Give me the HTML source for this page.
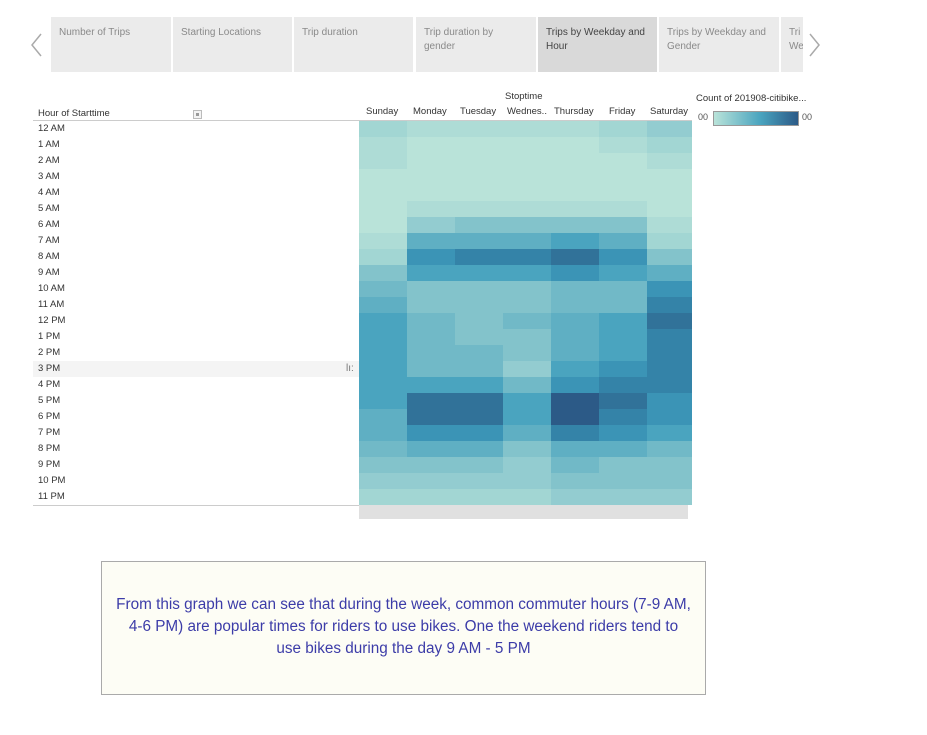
<!DOCTYPE html>
<html><head><meta charset="utf-8"><style>
*{margin:0;padding:0;box-sizing:border-box}
body{width:927px;height:735px;background:#fff;position:relative;font-family:"Liberation Sans",sans-serif;overflow:hidden}
.a{position:absolute}
.tab{position:absolute;top:17px;height:55px;background:#ebebeb;color:#8a8a8a;font-size:10px;line-height:14px;padding:9px 8px;overflow:hidden;white-space:nowrap}
.tab.sel{background:#d9d9d9;color:#444}
.lbl{position:absolute;left:38px;font-size:9.5px;color:#333;height:16px;line-height:16px}
.day{position:absolute;top:106px;font-size:9.5px;color:#333}
#grid{position:absolute;left:359px;top:121px;width:333px;display:grid;grid-template-columns:48px 48px 48px 48px 48px 48px 45px;grid-auto-rows:16px}
.c0{background:#b9e3d9}.c1{background:#aedcd6}.c2{background:#a2d6d3}.c3{background:#93ccd0}.c4{background:#83c3cb}.c5{background:#71b9c7}.c6{background:#5fafc3}.c7{background:#4aa4bf}.c8{background:#3b94b6}.c9{background:#3483a8}.c10{background:#317299}.c11{background:#2c5a87}
</style></head><body>
<div class="a" style="left:30px;top:33px;width:12px;height:24px"><svg width="12" height="24"><path d="M11 1 L2 12 L11 23" stroke="#aaa" stroke-width="1.5" fill="none"/></svg></div>
<div class="tab" style="left:51px;width:120px">Number of Trips</div>
<div class="tab" style="left:173px;width:119px">Starting Locations</div>
<div class="tab" style="left:294px;width:119px">Trip duration</div>
<div class="tab" style="left:416px;width:120px">Trip duration by<br>gender</div>
<div class="tab sel" style="left:538px;width:119px">Trips by Weekday and<br>Hour</div>
<div class="tab" style="left:659px;width:120px">Trips by Weekday and<br>Gender</div>
<div class="tab" style="left:781px;width:22px;padding-left:8px">Tri<br>We</div>
<div class="a" style="left:809px;top:33px;width:12px;height:24px"><svg width="12" height="24"><path d="M1 1 L10 12 L1 23" stroke="#aaa" stroke-width="1.5" fill="none"/></svg></div>

<div class="a" style="left:38px;top:108px;font-size:9.5px;color:#333">Hour of Starttime</div>
<div class="a" style="left:193px;top:110px;width:9px;height:9px;border:1px solid #bbb;background:#f3f3f3"><div style="margin:2px;width:3px;height:3px;background:#999"></div></div>
<div class="a" style="left:33px;top:120px;width:326px;height:1px;background:#ccc"></div>
<div class="a" style="left:33px;top:505px;width:326px;height:1px;background:#ccc"></div>
<div class="a" style="left:33px;top:361px;width:326px;height:16px;background:#f4f4f4"></div>
<div class="a" style="left:346px;top:363px;font-size:10px;color:#777">lı:</div>
<div class="a" style="left:505px;top:91px;font-size:9.5px;color:#333">Stoptime</div>
<div class="day" style="left:366px">Sunday</div>
<div class="day" style="left:413px">Monday</div>
<div class="day" style="left:460px">Tuesday</div>
<div class="day" style="left:507px">Wednes..</div>
<div class="day" style="left:554px">Thursday</div>
<div class="day" style="left:609px">Friday</div>
<div class="day" style="left:650px">Saturday</div>
<div class="a" style="left:359px;top:120px;width:333px;height:1px;background:#ccc"></div>

<div class="a" style="left:696px;top:93px;font-size:9.5px;color:#333">Count of 201908-citibike...</div>
<div class="a" style="left:698px;top:112px;font-size:9px;color:#555">00</div>
<div class="a" style="left:713px;top:111px;width:86px;height:15px;border:1px solid #999;background:linear-gradient(90deg,#b9e3d9,#4aa4bf 55%,#2c5a87)"></div>
<div class="a" style="left:802px;top:112px;font-size:9px;color:#555">00</div>

<div class="lbl" style="top:121px">12 AM</div><div class="lbl" style="top:137px">1 AM</div><div class="lbl" style="top:153px">2 AM</div><div class="lbl" style="top:169px">3 AM</div><div class="lbl" style="top:185px">4 AM</div><div class="lbl" style="top:201px">5 AM</div><div class="lbl" style="top:217px">6 AM</div><div class="lbl" style="top:233px">7 AM</div><div class="lbl" style="top:249px">8 AM</div><div class="lbl" style="top:265px">9 AM</div><div class="lbl" style="top:281px">10 AM</div><div class="lbl" style="top:297px">11 AM</div><div class="lbl" style="top:313px">12 PM</div><div class="lbl" style="top:329px">1 PM</div><div class="lbl" style="top:345px">2 PM</div><div class="lbl" style="top:361px">3 PM</div><div class="lbl" style="top:377px">4 PM</div><div class="lbl" style="top:393px">5 PM</div><div class="lbl" style="top:409px">6 PM</div><div class="lbl" style="top:425px">7 PM</div><div class="lbl" style="top:441px">8 PM</div><div class="lbl" style="top:457px">9 PM</div><div class="lbl" style="top:473px">10 PM</div><div class="lbl" style="top:489px">11 PM</div>

<div id="grid">
<div class="c2"></div><div class="c1"></div><div class="c1"></div><div class="c1"></div><div class="c1"></div><div class="c2"></div><div class="c3"></div>
<div class="c1"></div><div class="c0"></div><div class="c0"></div><div class="c0"></div><div class="c0"></div><div class="c1"></div><div class="c2"></div>
<div class="c1"></div><div class="c0"></div><div class="c0"></div><div class="c0"></div><div class="c0"></div><div class="c0"></div><div class="c1"></div>
<div class="c0"></div><div class="c0"></div><div class="c0"></div><div class="c0"></div><div class="c0"></div><div class="c0"></div><div class="c0"></div>
<div class="c0"></div><div class="c0"></div><div class="c0"></div><div class="c0"></div><div class="c0"></div><div class="c0"></div><div class="c0"></div>
<div class="c0"></div><div class="c1"></div><div class="c1"></div><div class="c1"></div><div class="c1"></div><div class="c1"></div><div class="c0"></div>
<div class="c0"></div><div class="c3"></div><div class="c4"></div><div class="c4"></div><div class="c4"></div><div class="c4"></div><div class="c1"></div>
<div class="c1"></div><div class="c6"></div><div class="c6"></div><div class="c6"></div><div class="c7"></div><div class="c6"></div><div class="c2"></div>
<div class="c2"></div><div class="c8"></div><div class="c9"></div><div class="c9"></div><div class="c10"></div><div class="c8"></div><div class="c4"></div>
<div class="c4"></div><div class="c7"></div><div class="c7"></div><div class="c7"></div><div class="c8"></div><div class="c7"></div><div class="c6"></div>
<div class="c5"></div><div class="c4"></div><div class="c4"></div><div class="c4"></div><div class="c5"></div><div class="c5"></div><div class="c8"></div>
<div class="c6"></div><div class="c4"></div><div class="c4"></div><div class="c4"></div><div class="c5"></div><div class="c5"></div><div class="c9"></div>
<div class="c7"></div><div class="c5"></div><div class="c4"></div><div class="c5"></div><div class="c6"></div><div class="c7"></div><div class="c10"></div>
<div class="c7"></div><div class="c5"></div><div class="c4"></div><div class="c4"></div><div class="c6"></div><div class="c7"></div><div class="c9"></div>
<div class="c7"></div><div class="c5"></div><div class="c5"></div><div class="c4"></div><div class="c6"></div><div class="c7"></div><div class="c9"></div>
<div class="c7"></div><div class="c5"></div><div class="c5"></div><div class="c3"></div><div class="c7"></div><div class="c8"></div><div class="c9"></div>
<div class="c7"></div><div class="c7"></div><div class="c7"></div><div class="c5"></div><div class="c8"></div><div class="c9"></div><div class="c9"></div>
<div class="c7"></div><div class="c10"></div><div class="c10"></div><div class="c7"></div><div class="c11"></div><div class="c10"></div><div class="c8"></div>
<div class="c6"></div><div class="c10"></div><div class="c10"></div><div class="c7"></div><div class="c11"></div><div class="c9"></div><div class="c8"></div>
<div class="c6"></div><div class="c8"></div><div class="c8"></div><div class="c6"></div><div class="c9"></div><div class="c8"></div><div class="c7"></div>
<div class="c5"></div><div class="c6"></div><div class="c6"></div><div class="c4"></div><div class="c6"></div><div class="c6"></div><div class="c5"></div>
<div class="c4"></div><div class="c4"></div><div class="c4"></div><div class="c3"></div><div class="c5"></div><div class="c4"></div><div class="c4"></div>
<div class="c3"></div><div class="c3"></div><div class="c3"></div><div class="c3"></div><div class="c4"></div><div class="c4"></div><div class="c4"></div>
<div class="c2"></div><div class="c2"></div><div class="c2"></div><div class="c2"></div><div class="c3"></div><div class="c3"></div><div class="c3"></div>
</div>
<div class="a" style="left:359px;top:505px;width:329px;height:14px;background:#e0e0e0"></div>

<div class="a" style="left:101px;top:561px;width:605px;height:134px;background:#fdfdf5;border:1px solid #aaa;display:flex;align-items:center;justify-content:center;text-align:center;color:#3c3ca8;font-size:15.3px;line-height:22px;white-space:nowrap;padding-bottom:2px">
<div>From this graph we can see that during the week, common commuter hours (7-9 AM,<br>4-6 PM) are popular times for riders to use bikes. One the weekend riders tend to<br>use bikes during the day 9 AM - 5 PM</div>
</div>
</body></html>
